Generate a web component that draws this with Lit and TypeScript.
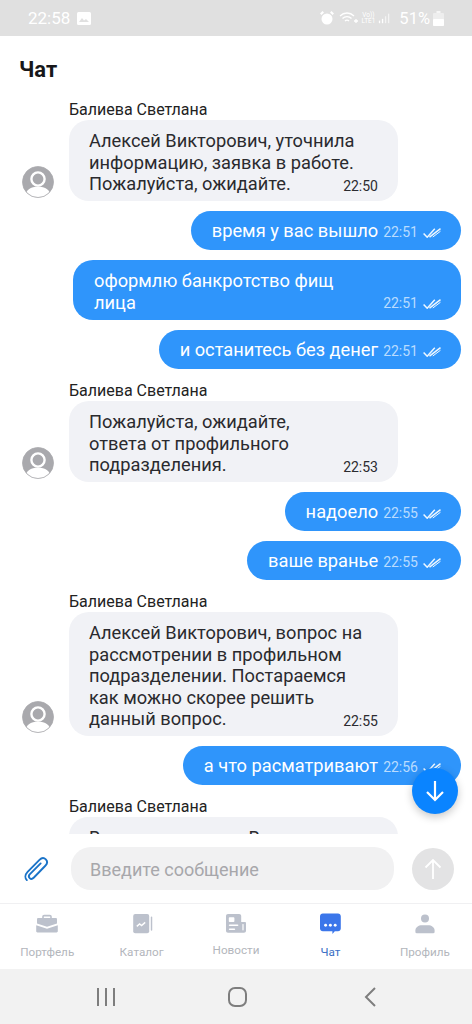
import { LitElement, html, css, svg } from "lit";
import { customElement } from "lit/decorators.js";

type Msg = { kind: "in" | "out"; lines: string[]; time?: string; cut?: boolean };

const messages: Msg[] = [
  { kind: "in", lines: ["Алексей Викторович, уточнила", "информацию, заявка в работе.", "Пожалуйста, ожидайте."], time: "22:50" },
  { kind: "out", lines: ["время у вас вышло"], time: "22:51" },
  { kind: "out", lines: ["оформлю банкротство фищ", "лица"], time: "22:51" },
  { kind: "out", lines: ["и останитесь без денег"], time: "22:51" },
  { kind: "in", lines: ["Пожалуйста, ожидайте,", "ответа от профильного", "подразделения."], time: "22:53" },
  { kind: "out", lines: ["надоело"], time: "22:55" },
  { kind: "out", lines: ["ваше вранье"], time: "22:55" },
  { kind: "in", lines: ["Алексей Викторович, вопрос на", "рассмотрении в профильном", "подразделении. Постараемся", "как можно скорее решить", "данный вопрос."], time: "22:55" },
  { kind: "out", lines: ["а что расматривают"], time: "22:56" },
  { kind: "in", lines: ["Вопрос о котором Вы"], cut: true },
];

const checks = html`<svg class="checks" width="18" height="10" viewBox="0 0 18 10" fill="none" stroke="currentColor" stroke-width="1.500">
  <path d="M.6 5.500l3.600 3.700L11.800.8" />
  <path d="M6.500 9.200L17.500.6" />
  <path d="M9.800 9L17.500 3.200" stroke-width="1" />
</svg>`;

const avatar = html`<svg class="avatar" width="32" height="32" viewBox="0 0 32 32">
  <defs><clipPath id="av"><circle cx="16" cy="16" r="15.500" /></clipPath></defs>
  <circle cx="16" cy="16" r="15.500" fill="#a9a9ad" />
  <g clip-path="url(#av)">
    <circle cx="16" cy="13" r="6.600" fill="#a9a9ad" stroke="#fff" stroke-width="2.400" />
    <path d="M3 32c0-8 6-11.500 13-11.500S29 24 29 32z" fill="#fff" />
  </g>
  <circle cx="16" cy="16" r="15.500" fill="none" stroke="#a9a9ad" stroke-width=".8" />
</svg>`;

const navIcons = {
  briefcase: svg`<path d="M9 6V4.500C9 3 10 2 11.500 2h7C20 2 21 3 21 4.500V6h-2V4.500c0-.3-.2-.5-.5-.5h-7c-.3 0-.5.2-.5.5V6z" fill="#bcc1cc"/>
    <path d="M4 6h22c.8 0 1.500.7 1.500 1.500V13L15 17 2.500 13V7.500C2.500 6.700 3.200 6 4 6z" fill="#bcc1cc"/>
    <path d="M1.500 15L15 19.500 28.500 15v7.500c0 .8-.7 1.500-1.500 1.500H3c-.8 0-1.500-.7-1.500-1.500z" fill="#bcc1cc"/>`,
  catalog: svg`<rect x="4" y="1" width="20" height="24" rx="2.500" fill="#bcc1cc"/>
    <rect x="26" y="4" width="1.800" height="18" rx=".9" fill="#bcc1cc"/>
    <path d="M8.500 16.500l3.500-3 2.500 2 4.500-4" fill="none" stroke="#fff" stroke-width="1.800"/>`,
  news: svg`<path d="M5 1h14c1.400 0 2.500 1.100 2.500 2.500V11H26c1 0 1.500.7 1.500 1.500V22c0 1.500-1 2.500-2.500 2.500H5c-1.400 0-2.500-1.100-2.500-2.500V3.500C2.500 2.100 3.600 1 5 1z" fill="#bcc1cc"/>
    <rect x="6" y="5" width="7" height="6" rx="1" fill="#fff"/>
    <rect x="6" y="14" width="12" height="2" rx="1" fill="#fff"/>
    <rect x="6" y="19" width="8" height="2" rx="1" fill="#fff"/>
    <rect x="23" y="13.500" width="1.500" height="8" rx=".7" fill="#fff"/>`,
  chat: svg`<path d="M6 .5h19c2 0 3.500 1.500 3.500 3.500v15c0 2-1.500 3.500-3.500 3.500h-4l-3 3.500v-3.500H6c-2 0-3.500-1.500-3.500-3.500V4C2.500 2 4 .5 6 .5z" fill="#3b76ea"/>
    <circle cx="9.500" cy="15" r="1.800" fill="#fff"/><circle cx="15.500" cy="15" r="1.800" fill="#fff"/><circle cx="21.500" cy="15" r="1.800" fill="#fff"/>`,
  profile: svg`<circle cx="15" cy="6.500" r="5" fill="#bcc1cc"/>
    <path d="M4.500 25c-1 0-1.500-.6-1.500-1.500v-2C3 17.500 7 15 11 15h8c4 0 8 2.500 8 6.500v2c0 .9-.5 1.500-1.500 1.500z" fill="#bcc1cc"/>`,
};

const tabs = [
  { label: "Портфель", icon: navIcons.briefcase },
  { label: "Каталог", icon: navIcons.catalog },
  { label: "Новости", icon: navIcons.news, lifted: true },
  { label: "Чат", icon: navIcons.chat, active: true },
  { label: "Профиль", icon: navIcons.profile },
];

@customElement("app-root")
export class AppRoot extends LitElement {
  static styles = css`
    :host {
      display: block;
      width: 472px;
      height: 1024px;
      font-family: Roboto, "Noto Sans", sans-serif;
      color: #1c1c1e;
      background: #fff;
      overflow: hidden;
    }
    .page {
      position: relative;
      height: 1024px;
      display: flex;
      flex-direction: column;
    }
    .status {
      height: 36px;
      flex: none;
      background: #e0e0e0;
      color: #fff;
      display: flex;
      align-items: center;
      padding: 0 28px 0 28px;
      font-size: 17px;
      box-sizing: border-box;
    }
    .status .spacer { flex: 1; }
    .status .clock { margin-right: 7px; }
    .status .right { display: flex; align-items: center; gap: 4px; }
    .status .lte { font-size: 6.500px; line-height: 6.500px; text-align: center; margin: 0 -1px; }
    .status .pct { font-size: 16.500px; margin-left: 4px; margin-right: -1px; }
    .head {
      flex: none;
      height: 56px;
      padding: 10px 19px 0;
      display: flex;
      align-items: center;
      box-sizing: border-box;
      font-size: 22px;
      font-weight: 700;
      color: #17171a;
    }
    .feed {
      flex: 1;
      min-height: 0;
      overflow: hidden;
      display: flex;
      flex-direction: column;
      gap: 10px;
      padding: 9px 11px 0 22px;
    }
    .in { display: flex; align-items: flex-end; gap: 15px; flex: none; margin-top: 3px; }
    .in:first-child { margin-top: 0; }
    .in .avatar { flex: none; margin-bottom: 3px; }
    .in.cut .avatar { visibility: hidden; }
    .in .col { display: flex; flex-direction: column; }
    .name { font-size: 16px; line-height: 17px; margin-bottom: 2px; color: #222; }
    .bubble {
      font-size: 18.250px;
      line-height: 21.500px;
      border-radius: 20px;
      box-sizing: border-box;
      position: relative;
      flex: none;
    }
    .in .bubble {
      width: 329px;
      background: #f1f2f6;
      padding: 10px 20px 6.500px;
      color: #2a2a2e;
    }
    .in.cut .bubble { padding-top: 10px; }
    .in .time {
      position: absolute;
      right: 20px;
      bottom: 7px;
      font-size: 14px;
      line-height: 15px;
      color: #2b2b30;
    }
    .out {
      align-self: flex-end;
      background: #2f95fb;
      color: #fff;
      padding: 9px 20px 8.500px 21px;
      display: flex;
      align-items: flex-end;
      gap: 5px;
      flex: none;
    }
    .out.wide { width: 388px; padding: 10px 20px 7px 21px; }
    .out .text { flex: 1; }
    .out .meta {
      display: flex;
      align-items: center;
      gap: 5px;
      font-size: 14px;
      line-height: 20px;
      color: #b9dcff;
      flex: none;
    }
    .checks { color: #eef7ff; margin-top: 2px; }
    .fab {
      position: absolute;
      left: 412px;
      top: 768px;
      width: 46px;
      height: 46px;
      border-radius: 50%;
      background: #0a84ff;
      box-shadow: 0 3px 8px rgba(0, 0, 0, 0.22);
      display: flex;
      align-items: center;
      justify-content: center;
    }
    .composer {
      flex: none;
      height: 70px;
      background: #fff;
      display: flex;
      align-items: center;
      padding: 0 18px 0 22px;
      box-sizing: border-box;
      border-bottom: 1px solid #f0f0f2;
    }
    .clip { flex: none; width: 28px; height: 28px; margin-right: 21px; }
    .input {
      flex: none;
      width: 323px;
      height: 43px;
      border-radius: 20px;
      background: #f1f1f2;
      color: #a7a7ab;
      font-size: 18px;
      display: flex;
      align-items: center;
      padding: 1px 19px 0;
      box-sizing: border-box;
    }
    .send {
      flex: none;
      width: 42px;
      height: 42px;
      border-radius: 50%;
      background: #e3e3e4;
      margin-left: 18px;
      display: flex;
      align-items: center;
      justify-content: center;
    }
    .tabs {
      flex: none;
      height: 65px;
      display: flex;
      box-sizing: border-box;
    }
    .tab {
      flex: 1;
      display: flex;
      flex-direction: column;
      align-items: center;
      padding-top: 9px;
      font-size: 11.700px;
      line-height: 14px;
      color: #b3b6bc;
      gap: 10px;
    }
    .tab.lifted { gap: 8px; }
    .tab.active { color: #3a6fc4; }
    .sysnav {
      flex: none;
      height: 55px;
      background: #f2f2f2;
      display: flex;
      align-items: center;
      justify-content: center;
    }
  `;

  private renderMsg(m: Msg) {
    const lines = m.lines.map((l, i) => html`${i ? html`<br />` : ""}${l}`);
    if (m.kind === "in") {
      return html`<div class="in ${m.cut ? "cut" : ""}">
        ${avatar}
        <div class="col">
          <div class="name">Балиева Светлана</div>
          <div class="bubble">${lines}${m.time ? html`<span class="time">${m.time}</span>` : ""}</div>
        </div>
      </div>`;
    }
    return html`<div class="bubble out ${m.lines.length > 1 ? "wide" : ""}">
      <span class="text">${lines}</span>
      <span class="meta">${m.time} ${checks}</span>
    </div>`;
  }

  render() {
    return html`<div class="page">
      <div class="status">
        <span class="clock">22:58</span>
        <svg width="14" height="13" viewBox="0 0 14 13"><rect width="14" height="13" rx="1.500" fill="#fff" /><path d="M2 10l3-4 2 2.500 2-1.500 3 3z" fill="#e0e0e0" /></svg>
        <span class="spacer"></span>
        <div class="right">
          <svg width="16" height="16" viewBox="0 0 16 16" fill="#fff"><circle cx="8" cy="9" r="5.500" /><path d="M1 3.500L3.500 1 5 2.500 2.500 5zM15 3.500L12.500 1 11 2.500 13.500 5z" /></svg>
          <svg width="20" height="14" viewBox="0 0 20 14" fill="none" stroke="#fff" stroke-width="1.300"><path d="M1 5c4-4 10-4 14 0M3.500 7.500c2.500-2.500 6.500-2.500 9 0M6 10c1-1 3-1 4 0" /><path d="M15 10h4M17 8v4" /></svg>
          <span class="lte">Vo))<br />LTE1</span>
          <svg width="13" height="14" viewBox="0 0 15 14" fill="#fff"><rect x="1" y="10" width="1.500" height="3" /><rect x="4.500" y="8" width="1.500" height="5" /><rect x="8" y="5" width="1.500" height="8" opacity=".6" /><rect x="11.500" y="2" width="1.500" height="11" opacity=".6" /></svg>
          <span class="pct">51%</span>
          <svg width="11" height="15" viewBox="0 0 11 15" fill="#fff"><rect x="3.500" y="0" width="4" height="2" opacity=".7" /><rect x="0" y="2" width="11" height="13" rx="1" opacity=".45" /><rect x="0" y="8" width="11" height="7" rx="1" /></svg>
        </div>
      </div>
      <div class="head">Чат</div>
      <div class="feed">${messages.map((m) => this.renderMsg(m))}</div>
      <div class="composer">
        <svg class="clip" viewBox="0 0 30 30" fill="none" stroke="#1a73c8" stroke-width="2" stroke-linecap="round">
          <path d="M20 9L8.500 20.500c-1.800 1.800-1 3.500-.3 4.200.9.900 2.700 1.300 4.300-.3L25 11.500c2.500-2.600 2-5.300.5-6.800-1.600-1.600-4.300-2-6.800.5L6 18c-3.300 3.400-2.700 7-.8 8.900" />
        </svg>
        <div class="input">Введите сообщение</div>
        <div class="send">
          <svg width="20" height="22" viewBox="0 0 20 22" fill="none" stroke="#fff" stroke-width="1.800"><path d="M10 21V2M2.500 9.500L10 2l7.500 7.500" /></svg>
        </div>
      </div>
      <div class="tabs">
        ${tabs.map(
          (t) => html`<div class="tab ${t.active ? "active" : ""} ${t.lifted ? "lifted" : ""}">
            <svg width="24" height="22" viewBox="0 0 30 27">${t.icon}</svg>
            <span>${t.label}</span>
          </div>`,
        )}
      </div>
      <div class="sysnav">
        <svg width="472" height="55" viewBox="0 0 472 55" fill="none" stroke="#7e7e7e" stroke-width="2">
          <path d="M98 19v18M106 19v18M114 19v18" />
          <rect x="229" y="19" width="17" height="18" rx="6" />
          <path d="M375 19l-9 9 9 9" />
        </svg>
      </div>
      <div class="fab">
        <svg width="22" height="24" viewBox="0 0 22 24" fill="none" stroke="#fff" stroke-width="2.200"><path d="M11 2v19M3 13l8 8 8-8" /></svg>
      </div>
    </div>`;
  }
}
